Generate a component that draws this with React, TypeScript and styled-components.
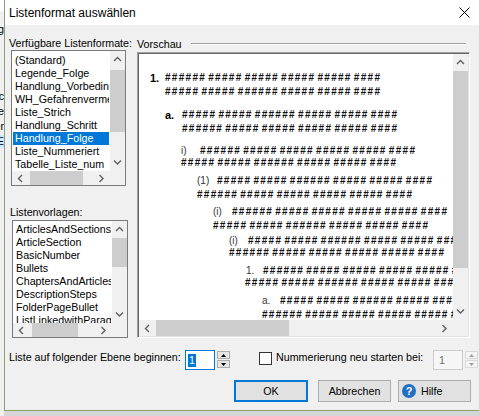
import React from "react";
import styled, { createGlobalStyle } from "styled-components";

const GlobalStyle = createGlobalStyle`
  html, body {
    margin: 0;
    padding: 0;
  }
  body {
    background: #d6d6d6;
    font-family: "Liberation Sans", Arial, sans-serif;
    font-size: 10.7px;
    color: #000;
  }
`;

const Screen = styled.div`
  width: 479px;
  height: 416px;
  display: flex;
  align-items: flex-start;
  overflow: hidden;
  background: #d6d6d6;
`;

/* the window behind the dialog, only a sliver shows */
const BehindWindow = styled.div`
  width: 4px;
  height: 416px;
  flex: none;
  overflow: hidden;
  background: #f0f0f0;
  display: flex;
  flex-direction: column;
  align-items: flex-end;
  border-top: 11px solid #fff;
`;

const BehindText = styled.div<{ $top: number; $selected?: boolean }>`
  margin-top: ${(p) => p.$top}px;
  height: 13px;
  line-height: 13px;
  white-space: nowrap;
  direction: rtl;
  background: ${(p) => (p.$selected ? "#cce8ff" : "transparent")};
`;

const Dialog = styled.div`
  width: 474px;
  height: 410px;
  flex: none;
  display: flex;
  flex-direction: column;
  background: #f0f0f0;
  border-left: 1px solid #8c9c80;
  border-bottom: 1px solid #86a366;
`;

const TitleBar = styled.div`
  height: 25px;
  flex: none;
  display: flex;
  align-items: center;
  justify-content: space-between;
  background: #fff;
  padding-left: 4px;
`;

const Title = styled.span`
  font-size: 12px;
  margin-top: 1px;
`;

const CloseButton = styled.div`
  width: 30px;
  height: 25px;
  display: flex;
  align-items: center;
  justify-content: center;
`;

const Body = styled.div`
  flex: 1;
  display: flex;
  flex-direction: column;
  padding: 12px 8px 0 6px;
`;

const TopSection = styled.div`
  display: flex;
  align-items: flex-start;
`;

const LeftColumn = styled.div`
  width: 117px;
  flex: none;
  display: flex;
  flex-direction: column;
`;

const RightColumn = styled.div`
  width: 333px;
  flex: none;
  margin-left: 9px;
  display: flex;
  flex-direction: column;
`;

const FieldLabel = styled.div<{ $shift?: number; $gap?: number }>`
  height: 13px;
  line-height: 13px;
  white-space: nowrap;
  margin-left: ${(p) => p.$shift ?? 0}px;
  margin-top: ${(p) => p.$gap ?? 0}px;
`;

const GroupHeader = styled.div`
  height: 13px;
  display: flex;
  align-items: center;
`;

const GroupLine = styled.div`
  flex: 1;
  height: 0;
  margin: 0 4px 0 9px;
  border-top: 1px solid #a0a0a0;
  border-bottom: 1px solid #fff;
`;

const ListBox = styled.div<{ $width: number; $height: number; $shift?: number; $gap?: number }>`
  box-sizing: border-box;
  width: ${(p) => p.$width}px;
  height: ${(p) => p.$height}px;
  margin-left: ${(p) => p.$shift ?? 0}px;
  margin-top: ${(p) => p.$gap ?? 0}px;
  border: 1px solid #7a7a7a;
  background: #fff;
  display: grid;
  grid-template-columns: 1fr 15px;
  grid-template-rows: 1fr 14px;
`;

const ListItems = styled.div<{ $pad: number }>`
  overflow: hidden;
  padding-top: ${(p) => p.$pad}px;
  display: flex;
  flex-direction: column;
`;

const ListItem = styled.div<{ $selected?: boolean }>`
  height: 13px;
  line-height: 13px;
  flex: none;
  padding-left: 2px;
  margin: 0 1px;
  white-space: nowrap;
  overflow: hidden;
  background: ${(p) => (p.$selected ? "#0078d7" : "transparent")};
  color: ${(p) => (p.$selected ? "#fff" : "#000")};
`;

const VScroll = styled.div`
  background: #f0f0f0;
  display: flex;
  flex-direction: column;
  min-height: 0;
`;

const HScroll = styled.div`
  background: #f0f0f0;
  display: flex;
  min-width: 0;
`;

const Corner = styled.div`
  background: #f0f0f0;
`;

const ArrowButton = styled.div<{ $vertical?: boolean }>`
  flex: none;
  width: ${(p) => (p.$vertical ? "auto" : "17px")};
  height: ${(p) => (p.$vertical ? "17px" : "auto")};
  display: flex;
  align-items: center;
  justify-content: center;
`;

const Track = styled.div<{ $vertical?: boolean }>`
  flex: 1;
  display: flex;
  flex-direction: ${(p) => (p.$vertical ? "column" : "row")};
  overflow: hidden;
`;

const Thumb = styled.div<{ $vertical?: boolean; $offset: number; $size: number }>`
  flex: none;
  background: #cdcdcd;
  ${(p) =>
    p.$vertical
      ? `margin-top: ${p.$offset}px; height: ${p.$size}px;`
      : `margin-left: ${p.$offset}px; width: ${p.$size}px;`}
`;

const PreviewBox = styled.div`
  box-sizing: border-box;
  width: 333px;
  height: 286px;
  margin-top: 2px;
  border: 1px solid;
  border-color: #a0a0a0 #fff #fff #a0a0a0;
  box-shadow: inset 1px 1px 0 #696969, inset -1px -1px 0 #e3e3e3;
  padding: 1px;
  display: grid;
  grid-template-columns: 1fr 15px;
  grid-template-rows: 1fr 16px;
  background: #fff;
`;

const PreviewContent = styled.div`
  overflow: hidden;
  display: flex;
  flex-direction: column;
  background: #fff;
`;

const Block = styled.div<{ $gap: number; $indent: number }>`
  flex: none;
  margin-top: ${(p) => p.$gap}px;
  padding-left: ${(p) => p.$indent}px;
  display: flex;
  flex-direction: column;
`;

const BlockLine = styled.div<{ $shift?: number; $gap?: number }>`
  height: 13px;
  display: flex;
  align-items: center;
  white-space: nowrap;
  margin-left: ${(p) => p.$shift ?? 0}px;
  margin-top: ${(p) => p.$gap ?? 0}px;
`;

const Number = styled.span<{ $width: number; $bold?: boolean }>`
  width: ${(p) => p.$width}px;
  flex: none;
  font-size: ${(p) => (p.$bold ? 11 : 10)}px;
  font-weight: ${(p) => (p.$bold ? 700 : 400)};
  color: ${(p) => (p.$bold ? "#000" : "#333")};
`;

const Hashes = styled.span`
  font-size: 10px;
  font-weight: 700;
  letter-spacing: 1.3px;
  word-spacing: -2px;
  color: #111;
`;

const OptionsRow = styled.div`
  display: flex;
  align-items: flex-start;
  height: 21px;
  margin-top: 11px;
`;

const InlineLabel = styled.div<{ $width: number; $shift?: number }>`
  width: ${(p) => p.$width}px;
  flex: none;
  margin-left: ${(p) => p.$shift ?? 0}px;
  padding-top: 2px;
  line-height: 13px;
  white-space: nowrap;
`;

const NumberInput = styled.div<{ $disabled?: boolean; $focused?: boolean }>`
  box-sizing: border-box;
  width: 30px;
  height: 20px;
  flex: none;
  margin-top: 1px;
  border: 1px solid ${(p) => (p.$focused ? "#0078d7" : "#cccccc")};
  background: ${(p) => (p.$disabled ? "#f6f6f6" : "#fff")};
  color: ${(p) => (p.$disabled ? "#6d6d6d" : "#000")};
  display: flex;
  align-items: center;
  padding-left: 2px;
`;

const SelectedText = styled.span`
  background: #0078d7;
  color: #fff;
  line-height: 13px;
  padding: 0 1px;
`;

const Spinner = styled.div`
  width: 13px;
  height: 17px;
  flex: none;
  margin: 2px 0 0 2px;
  display: flex;
  flex-direction: column;
  justify-content: space-between;
`;

const SpinButton = styled.div<{ $disabled?: boolean }>`
  box-sizing: border-box;
  height: 8px;
  border: 1px solid ${(p) => (p.$disabled ? "#d9d9d9" : "#adadad")};
  background: ${(p) => (p.$disabled ? "#f4f4f4" : "#e5e5e5")};
  display: flex;
  align-items: center;
  justify-content: center;
`;

const Checkbox = styled.div`
  box-sizing: border-box;
  width: 13px;
  height: 13px;
  flex: none;
  margin: 3px 0 0 29px;
  border: 1px solid #333;
  background: #fff;
`;

const ButtonRow = styled.div`
  display: flex;
  justify-content: flex-end;
  margin-top: 10px;
`;

const Button = styled.div<{ $width: number; $default?: boolean; $after?: number }>`
  box-sizing: border-box;
  width: ${(p) => p.$width}px;
  height: 22px;
  margin-right: ${(p) => p.$after ?? 0}px;
  border: 1px solid ${(p) => (p.$default ? "#0078d7" : "#adadad")};
  box-shadow: ${(p) => (p.$default ? "inset 0 0 0 1px #0078d7" : "none")};
  background: #e1e1e1;
  display: flex;
  align-items: center;
  justify-content: center;
`;

const HelpButton = styled(Button)`
  justify-content: flex-start;
  padding-left: 3px;
  gap: 5px;
`;

const HelpIcon = styled.span`
  width: 14px;
  height: 14px;
  border-radius: 50%;
  background: #1f6fc5;
  color: #fff;
  font-weight: 700;
  font-size: 11px;
  line-height: 14px;
  text-align: center;
`;

type Dir = "up" | "down" | "left" | "right";

function Chevron({ dir, color = "#606060" }: { dir: Dir; color?: string }) {
  const paths: Record<Dir, string> = {
    up: "M1 5 L4.5 1.5 L8 5",
    down: "M1 1.5 L4.5 5 L8 1.5",
    left: "M5 1 L1.5 4.5 L5 8",
    right: "M1.5 1 L5 4.5 L1.5 8",
  };
  const vertical = dir === "up" || dir === "down";
  return (
    <svg width={vertical ? 9 : 7} height={vertical ? 7 : 9}>
      <path d={paths[dir]} fill="none" stroke={color} strokeWidth="1.4" />
    </svg>
  );
}

function SpinArrow({ up, color }: { up?: boolean; color: string }) {
  return (
    <svg width="5" height="3">
      <path d={up ? "M0 3 L2.5 0 L5 3 Z" : "M0 0 L2.5 3 L5 0 Z"} fill={color} />
    </svg>
  );
}

interface ScrollProps {
  offset: number;
  size: number;
}

function VerticalScrollbar({ offset, size }: ScrollProps) {
  return (
    <VScroll>
      <ArrowButton $vertical>
        <Chevron dir="up" />
      </ArrowButton>
      <Track $vertical>
        <Thumb $vertical $offset={offset} $size={size} />
      </Track>
      <ArrowButton $vertical>
        <Chevron dir="down" />
      </ArrowButton>
    </VScroll>
  );
}

function HorizontalScrollbar({ offset, size }: ScrollProps) {
  return (
    <HScroll>
      <ArrowButton>
        <Chevron dir="left" />
      </ArrowButton>
      <Track>
        <Thumb $offset={offset} $size={size} />
      </Track>
      <ArrowButton>
        <Chevron dir="right" />
      </ArrowButton>
    </HScroll>
  );
}

const formats = [
  "(Standard)",
  "Legende_Folge",
  "Handlung_Vorbedingung",
  "WH_Gefahrenvermerk",
  "Liste_Strich",
  "Handlung_Schritt",
  "Handlung_Folge",
  "Liste_Nummeriert",
  "Tabelle_Liste_num",
];

const templates = [
  "ArticlesAndSections",
  "ArticleSection",
  "BasicNumber",
  "Bullets",
  "ChaptersAndArticles",
  "DescriptionSteps",
  "FolderPageBullet",
  "ListLinkedwithParagraph",
];

const H1 = "###### ##### ##### ##### ##### ####";
const H2 = "##### ##### ###### ##### ##### ####";

const levels = [
  { num: "1.", bold: true, x: 11, text: 26, second: 26, gap: 17, off: 1 },
  { num: "a.", bold: true, x: 26, text: 43, second: 43, gap: 10, off: 1 },
  { num: "i)", x: 42, text: 61, second: 42, gap: 9, off: -1 },
  { num: "(1)", x: 58, text: 78, second: 58, gap: 5, off: 1 },
  { num: "(i)", x: 74, text: 93, second: 74, gap: 4, off: 1 },
  { num: "(i)", x: 90, text: 109, second: 90, gap: 2, off: -1 },
  { num: "1.", x: 107, text: 124, second: 106, gap: 5, off: -1 },
  { num: "a.", x: 123, text: 141, second: 123, gap: 5, off: 1 },
];

export default function App() {
  return (
    <Screen>
      <GlobalStyle />
      <BehindWindow>
        <BehindText $top={12}>ng</BehindText>
        <BehindText $top={54}>c</BehindText>
        <BehindText $top={2}>e</BehindText>
        <BehindText $top={2}>er</BehindText>
        <BehindText $top={2} $selected>
          E
        </BehindText>
      </BehindWindow>
      <Dialog>
        <TitleBar>
          <Title>Listenformat auswählen</Title>
          <CloseButton>
            <svg width="11" height="11">
              <path d="M0.5 0.5 L10.5 10.5 M10.5 0.5 L0.5 10.5" stroke="#000" strokeWidth="1" />
            </svg>
          </CloseButton>
        </TitleBar>
        <Body>
          <TopSection>
            <LeftColumn>
              <FieldLabel $shift={-2}>Verfügbare Listenformate:</FieldLabel>
              <ListBox $width={115} $height={136}>
                <ListItems $pad={3}>
                  {formats.map((f) => (
                    <ListItem key={f} $selected={f === "Handlung_Folge"}>
                      {f}
                    </ListItem>
                  ))}
                </ListItems>
                <VerticalScrollbar offset={2} size={62} />
                <HorizontalScrollbar offset={1} size={53} />
                <Corner />
              </ListBox>
              <FieldLabel $shift={-1} $gap={20}>
                Listenvorlagen:
              </FieldLabel>
              <ListBox $width={116} $height={118} $shift={1} $gap={1}>
                <ListItems $pad={2}>
                  {templates.map((t) => (
                    <ListItem key={t}>{t}</ListItem>
                  ))}
                </ListItems>
                <VerticalScrollbar offset={0} size={29} />
                <HorizontalScrollbar offset={2} size={46} />
                <Corner />
              </ListBox>
            </LeftColumn>
            <RightColumn>
              <GroupHeader>
                <span>Vorschau</span>
                <GroupLine />
              </GroupHeader>
              <PreviewBox>
                <PreviewContent>
                  {levels.map((l, i) => (
                    <Block key={i} $gap={l.gap} $indent={l.x}>
                      <BlockLine>
                        <Number $width={l.text - l.x} $bold={l.bold}>
                          {l.num}
                        </Number>
                        <Hashes>{i % 2 ? H2 : H1}</Hashes>
                      </BlockLine>
                      <BlockLine $shift={l.second - l.x} $gap={l.off}>
                        <Hashes>{i % 2 ? H1 : H2}</Hashes>
                      </BlockLine>
                    </Block>
                  ))}
                </PreviewContent>
                <VerticalScrollbar offset={0} size={197} />
                <HorizontalScrollbar offset={0} size={133} />
                <Corner />
              </PreviewBox>
            </RightColumn>
          </TopSection>
          <OptionsRow>
            <InlineLabel $width={176} $shift={-2}>
              Liste auf folgender Ebene beginnen:
            </InlineLabel>
            <NumberInput $focused>
              <SelectedText>1</SelectedText>
            </NumberInput>
            <Spinner>
              <SpinButton>
                <SpinArrow up color="#000" />
              </SpinButton>
              <SpinButton>
                <SpinArrow color="#000" />
              </SpinButton>
            </Spinner>
            <Checkbox />
            <InlineLabel $width={157} $shift={4}>
              Nummerierung neu starten bei:
            </InlineLabel>
            <NumberInput $disabled>&nbsp;1</NumberInput>
            <Spinner>
              <SpinButton $disabled>
                <SpinArrow up color="#a0a0a0" />
              </SpinButton>
              <SpinButton $disabled>
                <SpinArrow color="#a0a0a0" />
              </SpinButton>
            </Spinner>
          </OptionsRow>
          <ButtonRow>
            <Button $width={74} $after={10} $default>
              OK
            </Button>
            <Button $width={73} $after={7}>
              Abbrechen
            </Button>
            <HelpButton $width={73}>
              <HelpIcon>?</HelpIcon>
              Hilfe
            </HelpButton>
          </ButtonRow>
        </Body>
      </Dialog>
    </Screen>
  );
}
